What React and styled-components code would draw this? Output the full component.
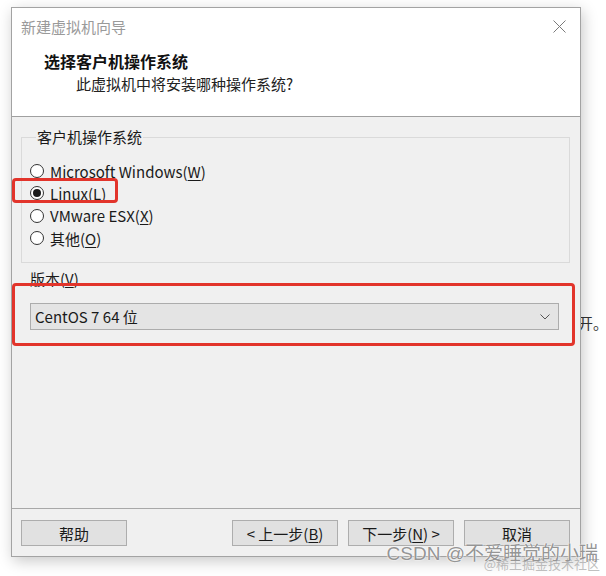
import React from "react";
import styled, { createGlobalStyle } from "styled-components";

const Global = createGlobalStyle`
  html, body { margin: 0; padding: 0; background: #ffffff; }
  body { font-family: "Noto Sans CJK SC", "Noto Sans", sans-serif; color: #1a1a1a; }
  * { box-sizing: border-box; }
`;

const Page = styled.div`
  position: relative;
  width: 606px;
  height: 576px;
  overflow: hidden;
  background: #ffffff;
  padding: 7px 0 0 11px;
`;

const Window = styled.div`
  position: relative;
  z-index: 2;
  width: 570px;
  height: 550px;
  border: 1px solid #a3a3a3;
  background: #f0f0f0;
  box-shadow: 2px 4px 14px rgba(0, 0, 0, 0.22);
  display: flex;
  flex-direction: column;
`;

const Header = styled.div`
  background: #ffffff;
  height: 109px;
  border-bottom: 1px solid #a0a0a0;
  display: flex;
  flex-direction: column;
`;

const TitleBar = styled.div`
  height: 36px;
  display: flex;
  align-items: center;
  justify-content: space-between;
  padding: 0 14px 0 9px;
  font-size: 15px;
  color: #9a9a9a;
`;

const CloseIcon = styled.svg`
  width: 13px;
  height: 13px;
  margin-top: 1px;
`;

const HeadTitle = styled.div`
  margin-top: 6px;
  padding-left: 32px;
  font-size: 16px;
  font-weight: 700;
  line-height: 22px;
  color: #111;
`;

const HeadSub = styled.div`
  padding-left: 64px;
  font-size: 15px;
  line-height: 24px;
  color: #222;
`;

const Body = styled.div`
  flex: 1;
  padding: 10px 10px 0 9px;
  display: flex;
  flex-direction: column;
`;

const Group = styled.fieldset`
  margin: 0;
  padding: 13px 8px 12px 8px;
  border: 1px solid #dadada;
  border-radius: 0;
  min-width: 0;
  height: 136px;
`;

const Legend = styled.legend`
  padding: 0 1px 0 1px;
  margin-left: 6px;
  font-size: 15px;
  line-height: 20px;
  color: #1a1a1a;
`;

const RadioRow = styled.label`
  display: flex;
  align-items: center;
  height: 22.3px;
  font-size: 15px;
  color: #1a1a1a;
  gap: 6px;
`;

const RadioCircle = styled.span`
  width: 14px;
  height: 14px;
  border-radius: 50%;
  border: 1px solid #333;
  background: #fff;
  display: flex;
  align-items: center;
  justify-content: center;
  flex: none;
  &::after {
    content: "";
    width: 8px;
    height: 8px;
    border-radius: 50%;
    background: ${(p) => (p.$checked ? "#1a1a1a" : "transparent")};
  }
`;

const U = styled.span`
  text-decoration: underline;
  text-underline-offset: 2px;
`;

const VersionLabel = styled.div`
  margin: 6px 0 0 9px;
  font-size: 15px;
  line-height: 20px;
  color: #1a1a1a;
`;

const Select = styled.div`
  margin: 14px 0 0 9px;
  width: 529px;
  height: 27px;
  border: 1px solid #acacac;
  background: #e4e4e4;
  display: flex;
  align-items: center;
  justify-content: space-between;
  padding: 0 8px 0 4px;
  font-size: 15px;
  color: #1a1a1a;
`;

const Chevron = styled.svg`
  width: 10px;
  height: 6px;
`;

const Footer = styled.div`
  border-top: 1px solid #a8a8a8;
  padding: 11px 10px 10px 9px;
  display: flex;
  align-items: center;
`;

const Button = styled.div`
  width: 106px;
  height: 26px;
  border: 1px solid #adadad;
  background: #e1e1e1;
  display: flex;
  align-items: center;
  justify-content: center;
  font-size: 15px;
  color: #1a1a1a;
  margin-left: ${(p) => p.$gap || 0}px;
`;

const Spacer = styled.div`
  flex: 1;
`;

const Mark = styled.div`
  position: absolute;
  left: ${(p) => p.$x}px;
  top: ${(p) => p.$y}px;
  width: ${(p) => p.$w}px;
  height: ${(p) => p.$h}px;
  border: 3px solid #e2342b;
  border-radius: 4px;
  z-index: 3;
  pointer-events: none;
`;

const Behind = styled.div`
  position: absolute;
  left: 578px;
  top: 313px;
  font-size: 15px;
  line-height: 20px;
  color: #333;
  z-index: 1;
`;

const Watermark = styled.div`
  position: absolute;
  right: 8px;
  top: 543px;
  font-family: "Liberation Sans", "Noto Sans CJK SC", sans-serif;
  font-size: 19px;
  line-height: 22px;
  color: rgba(120, 120, 120, 0.8);
  text-shadow: 0 0 1px #fff, 0 0 2px #fff;
  z-index: 4;
  white-space: nowrap;
`;

const Watermark2 = styled.div`
  position: absolute;
  right: 6px;
  top: 556px;
  font-family: "Noto Sans CJK SC", sans-serif;
  font-size: 13px;
  line-height: 16px;
  color: rgba(150, 150, 150, 0.6);
  z-index: 4;
  white-space: nowrap;
`;

export default function App() {
  return (
    <>
      <Global />
      <Page>
        <Window>
          <Header>
            <TitleBar>
              <span>新建虚拟机向导</span>
              <CloseIcon viewBox="0 0 13 13">
                <path d="M0.5 0.5 L12.5 12.5 M12.5 0.5 L0.5 12.5" stroke="#7a7a7a" strokeWidth="1" fill="none" />
              </CloseIcon>
            </TitleBar>
            <HeadTitle>选择客户机操作系统</HeadTitle>
            <HeadSub>此虚拟机中将安装哪种操作系统?</HeadSub>
          </Header>
          <Body>
            <Group>
              <Legend>客户机操作系统</Legend>
              <RadioRow>
                <RadioCircle />
                <span>Microsoft Windows(<U>W</U>)</span>
              </RadioRow>
              <RadioRow>
                <RadioCircle $checked />
                <span>Linux(L)</span>
              </RadioRow>
              <RadioRow>
                <RadioCircle />
                <span>VMware ESX(<U>X</U>)</span>
              </RadioRow>
              <RadioRow>
                <RadioCircle />
                <span>其他(<U>O</U>)</span>
              </RadioRow>
            </Group>
            <VersionLabel>版本(<U>V</U>)</VersionLabel>
            <Select>
              <span>CentOS 7 64 位</span>
              <Chevron viewBox="0 0 10 6">
                <path d="M0.5 0.5 L5 5 L9.5 0.5" stroke="#555" strokeWidth="1" fill="none" />
              </Chevron>
            </Select>
          </Body>
          <Footer>
            <Button>帮助</Button>
            <Spacer />
            <Button>&lt; 上一步(<U>B</U>)</Button>
            <Button $gap={10}>下一步(<U>N</U>) &gt;</Button>
            <Button $gap={10}>取消</Button>
          </Footer>
        </Window>
        <Behind>开。</Behind>
        <Mark $x={12} $y={178} $w={106} $h={25} />
        <Mark $x={12} $y={283} $w={563} $h={63} />
        <Watermark>CSDN @不爱睡觉的小瑞</Watermark>
        <Watermark2>@稀土掘金技术社区</Watermark2>
      </Page>
    </>
  );
}
